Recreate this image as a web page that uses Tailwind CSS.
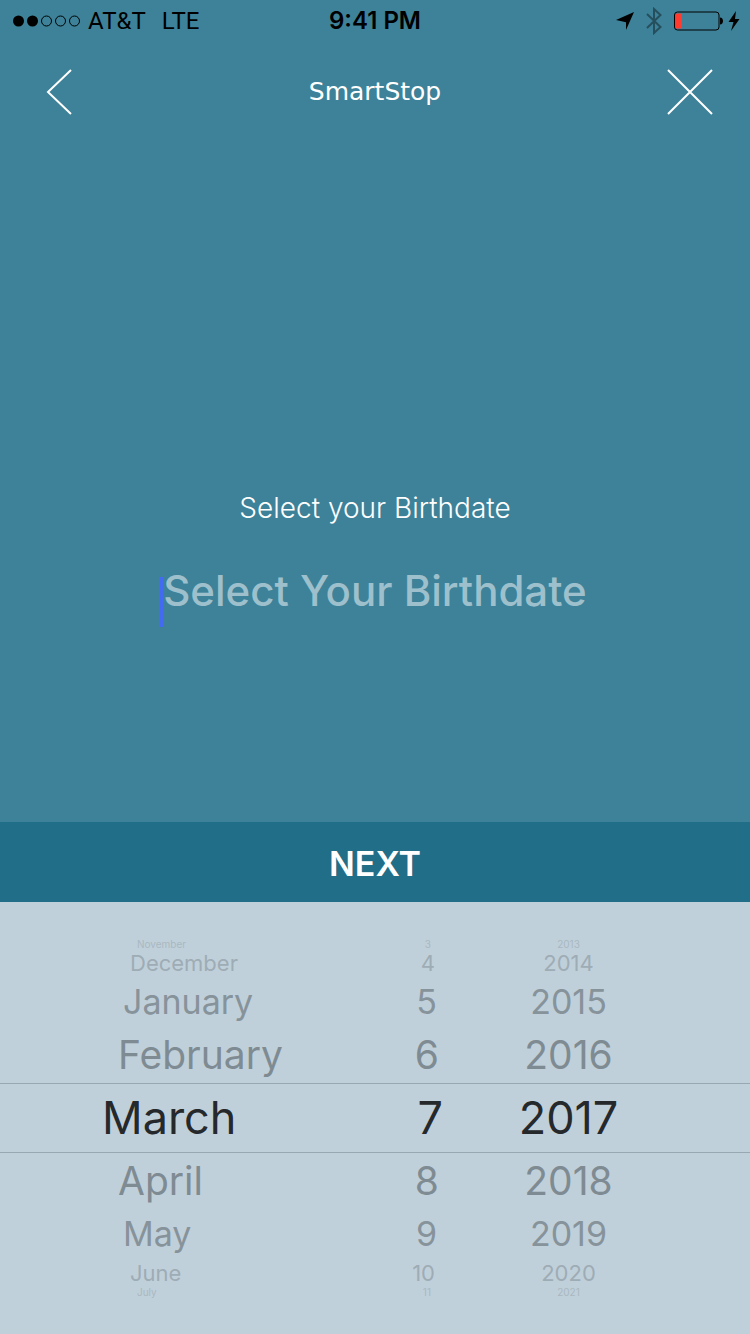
<!DOCTYPE html>
<html lang="en">
<head>
<meta charset="utf-8">
<meta name="viewport" content="width=device-width, initial-scale=1">
<title>SmartStop - Birthdate</title>
<script src="https://cdn.jsdelivr.net/npm/@tailwindcss/browser@4"></script>
</head>
<body class="flex min-h-screen flex-col bg-[#3d8299] font-['Inter','Liberation_Sans',sans-serif] text-white">
  <!-- Status bar -->
  <div class="grid h-10 grid-cols-3 items-center px-3 pt-px text-2xl text-black">
    <div class="flex items-center">
      <svg class="h-3 w-[70px]" viewBox="0 0 70 12" fill="none" stroke="#000" aria-hidden="true">
        <circle cx="6.500" cy="6" r="5.500" fill="#000" stroke="none"/>
        <circle cx="20.500" cy="6" r="5.500" fill="#000" stroke="none"/>
        <circle cx="34.500" cy="6" r="5"/>
        <circle cx="48.500" cy="6" r="5"/>
        <circle cx="62.500" cy="6" r="5"/>
      </svg>
      <span class="ml-1.5 font-['Roboto',sans-serif]">AT&amp;T</span>
      <span class="ml-4 font-['Roboto',sans-serif]">LTE</span>
    </div>
    <div class="text-center font-semibold">9:41 PM</div>
    <div class="flex items-center justify-end">
      <svg class="h-[18px] w-[18px]" viewBox="0 0 18 18" aria-hidden="true"><path d="M18 0 10 18V10.300L0 8Z"/></svg>
      <svg class="ml-3 h-7 w-4 text-[#264f5d]" viewBox="0 0 16 28" fill="none" stroke="currentColor" stroke-width="2" aria-hidden="true"><path d="M1 7 14.500 20 8 26V2l6.500 6L1 21"/></svg>
      <svg class="ml-3 h-5 w-[50px]" viewBox="0 0 50 20" aria-hidden="true"><rect x=".5" y="1" width="44.500" height="18" rx="3" fill="none" stroke="#000"/><path d="M3 2.500H8v15H3a1.500 1.500 0 0 1-1.500-1.500V4A1.500 1.500 0 0 1 3 2.500Z" fill="#ff3b30"/><path d="M46 6.500c4 0 4 7 0 7Z"/></svg>
      <svg class="ml-1 -mr-0.5 h-5 w-3" viewBox="0 0 12 20" aria-hidden="true"><path d="M8 0 .5 11h5L3 20 11.500 8H7Z"/></svg>
    </div>
  </div>

  <!-- Navigation -->
  <header class="grid h-[104px] grid-cols-3 items-center px-9">
    <button type="button" aria-label="Back" class="flex h-12 w-12 items-center justify-center">
      <svg class="h-12 w-7" viewBox="0 0 28 48" fill="none" stroke="#fff" stroke-width="2"><path d="M25 2 2 24 25 46"/></svg>
    </button>
    <div class="text-center font-['DejaVu_Sans',sans-serif] text-[25px]">SmartStop</div>
    <button type="button" aria-label="Close" class="flex h-12 w-12 items-center justify-center justify-self-end">
      <svg class="h-12 w-12" viewBox="0 0 48 48" fill="none" stroke="#fff" stroke-width="2"><path d="M2 2 46 46M46 2 2 46"/></svg>
    </button>
  </header>

  <!-- Birthdate field -->
  <main class="flex flex-1 flex-col items-center justify-end pb-[194px]">
    <label for="birthdate" class="text-[28px] leading-8 font-light">Select your Birthdate</label>
    <div class="relative mt-9">
      <input id="birthdate" type="text" placeholder="Select Your Birthdate" class="block h-[68px] w-[430px] bg-transparent pb-2 text-center text-[42px] font-medium text-white outline-none placeholder:text-[#9ec0cc]">
      <span class="absolute top-[17px] left-0 h-[50px] w-1 bg-[#436bf2]"></span>
    </div>
  </main>

  <button type="button" class="h-20 w-full bg-[#206e88] pt-0.5 text-[34px] font-semibold text-white">NEXT</button>

  <!-- Date wheel -->
  <section aria-label="Date picker" class="bg-[#c0d0da] py-[37px] text-[#7f8b92]">
    <div class="grid grid-cols-[340fr_103fr_307fr]">
      <div role="group" aria-label="Month" class="flex flex-col *:block *:text-left *:whitespace-nowrap">
        <button type="button" class="h-[10px] pl-[137px] text-[10px] leading-[10px] text-[#a9b8c1]">November</button>
        <button type="button" class="h-7 pl-[130px] text-[22px] leading-7 text-[#9eacb5]">December</button>
        <button type="button" class="h-[50px] pl-[123px] text-[34px] leading-[50px] text-[#87939a]">January</button>
        <button type="button" class="h-14 pl-[118px] text-[39px] leading-14">February</button>
        <button type="button" aria-pressed="true" class="h-[70px] border-y border-[#98a8b2] pl-[102px] text-[45px] leading-[68px] text-[#25292c]">March</button>
        <button type="button" class="h-14 pl-[118px] text-[39px] leading-14">April</button>
        <button type="button" class="h-[50px] pl-[123px] text-[34px] leading-[50px] text-[#87939a]">May</button>
        <button type="button" class="h-7 pl-[130px] text-[22px] leading-7 text-[#9eacb5]">June</button>
        <button type="button" class="h-[10px] pl-[137px] text-[10px] leading-[10px] text-[#a9b8c1]">July</button>
      </div>
      <div role="group" aria-label="Day" class="flex flex-col *:block *:text-right">
        <button type="button" class="h-[10px] pr-3 text-[10px] leading-[10px] text-[#a9b8c1]">3</button>
        <button type="button" class="h-7 pr-2 text-[22px] leading-7 text-[#9eacb5]">4</button>
        <button type="button" class="h-[50px] pr-1.5 text-[34px] leading-[50px] text-[#87939a]">5</button>
        <button type="button" class="h-14 pr-1 text-[39px] leading-14">6</button>
        <button type="button" aria-pressed="true" class="h-[70px] border-y border-[#98a8b2] text-[45px] leading-[68px] text-[#25292c]">7</button>
        <button type="button" class="h-14 pr-1 text-[39px] leading-14">8</button>
        <button type="button" class="h-[50px] pr-1.5 text-[34px] leading-[50px] text-[#87939a]">9</button>
        <button type="button" class="h-7 pr-2 text-[22px] leading-7 text-[#9eacb5]">10</button>
        <button type="button" class="h-[10px] pr-3 text-[10px] leading-[10px] text-[#a9b8c1]">11</button>
      </div>
      <div role="group" aria-label="Year" class="flex flex-col *:block *:pr-14 *:text-center">
        <button type="button" class="h-[10px] text-[10px] leading-[10px] text-[#a9b8c1]">2013</button>
        <button type="button" class="h-7 text-[22px] leading-7 text-[#9eacb5]">2014</button>
        <button type="button" class="h-[50px] text-[34px] leading-[50px] text-[#87939a]">2015</button>
        <button type="button" class="h-14 text-[39px] leading-14">2016</button>
        <button type="button" aria-pressed="true" class="h-[70px] border-y border-[#98a8b2] text-[45px] leading-[68px] text-[#25292c]">2017</button>
        <button type="button" class="h-14 text-[39px] leading-14">2018</button>
        <button type="button" class="h-[50px] text-[34px] leading-[50px] text-[#87939a]">2019</button>
        <button type="button" class="h-7 text-[22px] leading-7 text-[#9eacb5]">2020</button>
        <button type="button" class="h-[10px] text-[10px] leading-[10px] text-[#a9b8c1]">2021</button>
      </div>
    </div>
  </section>
</body>
</html>
